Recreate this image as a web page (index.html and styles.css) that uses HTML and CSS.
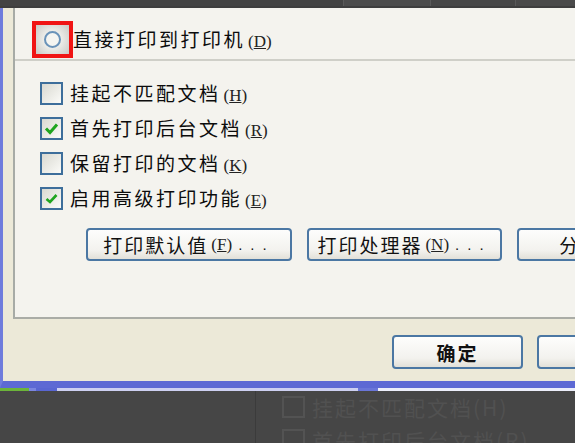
FILE: index.html
```html
<!DOCTYPE html>
<html lang="zh-CN">
  <head>
    <meta charset="UTF-8" />
    <title>打印机属性 - 高级</title>
    <link rel="stylesheet" href="styles.css">
  </head>
  <body>
    <div class="topbar">
      <span class="seg seg-a"></span>
      <span class="seg seg-b"></span>
      <span class="seg seg-c"></span>
      <span class="seg seg-d"></span>
    </div>

    <div class="dialog">
      <div class="page">
        <div class="direct">
          <span class="radio-mark"><span class="radio"></span></span>
          <span class="label">直接打印到打印机<span class="key">(<u>D</u>)</span></span>
        </div>
        <div class="sep"></div>

        <div class="options">
          <label class="option">
            <span class="box"></span>
            <span class="label">挂起不匹配文档<span class="key">(<u>H</u>)</span></span>
          </label>
          <label class="option">
            <span class="box">
              <svg viewBox="0 0 19 19" width="19" height="19"><path d="M4 9.5 L8 13.5 L15 5.5" fill="none" stroke="#1fa51f" stroke-width="3" /></svg>
            </span>
            <span class="label">首先打印后台文档<span class="key">(<u>R</u>)</span></span>
          </label>
          <label class="option">
            <span class="box"></span>
            <span class="label">保留打印的文档<span class="key">(<u>K</u>)</span></span>
          </label>
          <label class="option">
            <span class="box">
              <svg viewBox="0 0 19 19" width="19" height="19"><path d="M4.5 10 L8 13 L14.5 6" fill="none" stroke="#1fa51f" stroke-width="2.6" /></svg>
            </span>
            <span class="label">启用高级打印功能<span class="key">(<u>E</u>)</span></span>
          </label>
        </div>

        <div class="buttons">
          <button class="btn btn-wide">打印默认值<span class="key">(<u>F</u>)</span><span class="dots">...</span></button>
          <button class="btn">打印处理器<span class="key">(<u>N</u>)</span><span class="dots">...</span></button>
          <button class="btn btn-sep">分隔页<span class="key">(<u>S</u>)</span><span class="dots">...</span></button>
        </div>
      </div>

      <div class="footer">
        <button class="btn btn-ok">确定</button>
        <button class="btn btn-ok"></button>
      </div>
    </div>

    <div class="taskbar">
      <span class="tb tb-green"></span>
      <span class="tb tb-blue"></span>
      <span class="tb tb-dark"></span>
      <span class="tb tb-light"></span>
      <span class="tb tb-blue2"></span>
      <span class="tb tb-white"></span>
    </div>

    <div class="ghost">
      <div class="ghost-line"></div>
      <div class="ghost-list">
        <div class="ghost-row"><span class="ghost-box"></span>挂起不匹配文档(H)</div>
        <div class="ghost-row"><span class="ghost-box"></span>首先打印后台文档(R)</div>
      </div>
    </div>
  </body>
</html>
```

FILE: styles.css
```css
* {
  margin: 0;
  padding: 0;
  box-sizing: border-box;
}

body {
  width: 575px;
  height: 443px;
  overflow: hidden;
  background: #464646;
  font-family: "Noto Sans CJK SC", sans-serif;
  color: #111;
}

.topbar {
  height: 8px;
  display: flex;
  background: #3e3e3e;
}

.topbar .seg {
  height: 6px;
}

.seg-a {
  width: 343px;
  background: #434343;
}

.seg-b {
  width: 87px;
  background: #4c4c4c;
  border-left: 1px solid #5a5a5a;
}

.seg-c {
  width: 85px;
  background: #474747;
  border-left: 1px solid #5a5a5a;
}

.seg-d {
  flex: 1;
  background: #4a4a4a;
  border-left: 1px solid #5a5a5a;
}

.dialog {
  width: 760px;
  height: 380px;
  display: flex;
  flex-direction: column;
  background: #ece9d8;
  border-left: 3px solid #6f7cdc;
  border-bottom: 7px solid #5d69d4;
}

.page {
  width: 740px;
  height: 311px;
  margin-left: 10px;
  background: #f4f3ee;
  border-left: 2px solid #a7aba6;
  border-bottom: 2px solid #aaaca6;
}

.label {
  font-size: 19px;
  letter-spacing: 2.5px;
  line-height: 23px;
  white-space: nowrap;
  color: #0c0c0c;
}

.key {
  font-family: "Liberation Serif", serif;
  font-size: 17px;
  letter-spacing: 0;
  margin-left: 3px;
  color: #222;
}

.direct {
  display: flex;
  align-items: center;
  margin: 13px 0 0 17px;
}

.radio-mark {
  width: 41px;
  height: 37px;
  display: flex;
  align-items: center;
  justify-content: center;
  border: 4px solid #f01414;
  background: radial-gradient(circle, #efefeb 35%, #c9c9c5 100%);
}

.radio {
  width: 17px;
  height: 17px;
  border: 2px solid #6a93b9;
  border-radius: 50%;
  background: #f5f5f1;
}

.sep {
  height: 2px;
  margin-top: 1px;
  background: #cfcfc8;
}

.options {
  display: flex;
  flex-direction: column;
  gap: 12px;
  margin: 21px 0 0 25px;
}

.option {
  display: flex;
  align-items: center;
  gap: 7px;
  height: 23px;
}

.box {
  width: 23px;
  height: 23px;
  display: flex;
  align-items: center;
  justify-content: center;
  border: 2px solid #3d6e9b;
  background: linear-gradient(135deg, #d9d9d1, #fbfbf8);
}

.buttons {
  display: flex;
  gap: 15px;
  margin: 18px 0 0 71px;
}

.btn {
  flex-shrink: 0;
  width: 195px;
  height: 33px;
  display: flex;
  align-items: center;
  justify-content: center;
  white-space: nowrap;
  font-family: "Noto Sans CJK SC", sans-serif;
  font-size: 19px;
  letter-spacing: 2px;
  color: #111;
  border: 2px solid #4b77a3;
  border-radius: 4px;
  background: linear-gradient(#fdfdfc, #f3f2ee 70%, #e2e0d8);
}

.btn-wide {
  width: 206px;
}

.btn-sep {
  width: 214px;
}

.btn .dots {
  letter-spacing: 8px;
  margin-left: 6px;
  font-family: "Liberation Sans", sans-serif;
  font-size: 15px;
}

.footer {
  display: flex;
  gap: 14px;
  padding: 16px 0 0 389px;
}

.btn-ok {
  width: 131px;
  height: 34px;
  font-weight: bold;
}

.taskbar {
  height: 3px;
  display: flex;
}

.tb-green {
  width: 29px;
  background: #6cb43a;
}

.tb-blue {
  width: 7px;
  background: #7b86df;
}

.tb-dark {
  width: 21px;
  background: #5966d2;
}

.tb-light {
  width: 301px;
  background: #cdd0f1;
}

.tb-blue2 {
  width: 20px;
  background: #6a76d8;
}

.tb-white {
  flex: 1;
  background: #eceefa;
}

.ghost {
  height: 52px;
  display: flex;
}

.ghost-line {
  width: 1px;
  margin-left: 255px;
  background: #3b3b3b;
}

.ghost-list {
  display: flex;
  flex-direction: column;
  gap: 11px;
  margin: 5px 0 0 26px;
}

.ghost-row {
  display: flex;
  align-items: center;
  gap: 7px;
  height: 22px;
  font-size: 21px;
  letter-spacing: 2px;
  color: #515151;
  white-space: nowrap;
}

.ghost-box {
  width: 23px;
  height: 22px;
  border: 2px solid #535353;
}
```
